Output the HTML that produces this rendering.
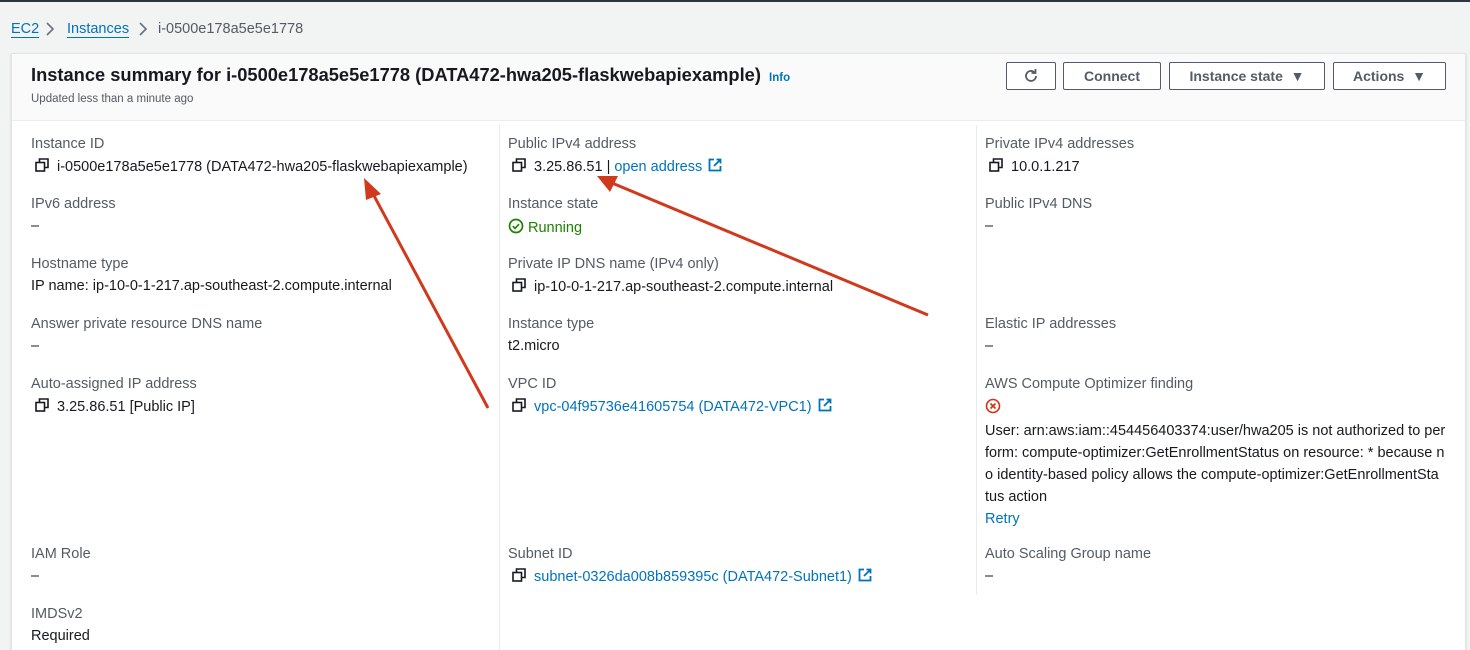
<!DOCTYPE html>
<html><head><style>
*{margin:0;padding:0;box-sizing:border-box}
html,body{width:1470px;height:650px;overflow:hidden}
body{background:#f2f3f3;font-family:"Liberation Sans",sans-serif;color:#16191f;position:relative;font-size:14.5px}
.a{position:absolute;white-space:nowrap}
.lbl{color:#545b64}
.lnk{color:#0073bb}
.card{position:absolute;left:11px;top:53px;width:1455px;height:620px;background:#fff;border:1px solid #e2e4e5;box-shadow:0 1px 2px rgba(0,0,0,.15)}
.hdr{position:absolute;left:0;top:0;right:0;height:67px;background:#fafafa;border-bottom:1px solid #eaeded}
.btn{position:absolute;top:62px;height:28px;border:1px solid #545b64;border-radius:2px;background:#fff;font-weight:bold;color:#545b64;text-align:center;line-height:26px;font-size:14px}
.vl{position:absolute;width:1px;background:#eaeded}
.cp{display:inline-block;vertical-align:-1px;margin-right:8px}
.ex{display:inline-block;vertical-align:-1px;margin-left:6px}
</style></head><body>
<svg width="0" height="0" style="position:absolute"><defs>
<symbol id="cp" viewBox="0 0 14 14"><rect x="1" y="4.5" width="8.5" height="8.5" fill="none" stroke="#16191f" stroke-width="1.6"/><path d="M4.5 4.5V1h8.5v8.5H9.5" fill="none" stroke="#16191f" stroke-width="1.6"/></symbol>
<symbol id="ex" viewBox="0 0 14 14"><path d="M6 1.5H1.5v11h11V8M8.5 1.5h4v4M12.5 1.5L6 8" fill="none" stroke="#0073bb" stroke-width="1.8"/></symbol>
</defs></svg>
<div class="a" style="left:0;top:0;width:1470px;height:2px;background:#2d3540"></div>
<div class="a lnk" style="left:11px;top:21px;border-bottom:1px solid #0073bb">EC2</div>
<svg class="a" style="left:45px;top:22px" width="10" height="14"><path d="M2 1l6 6-6 6" fill="none" stroke="#687078" stroke-width="1.6"/></svg>
<div class="a lnk" style="left:67px;top:21px;border-bottom:1px solid #0073bb">Instances</div>
<svg class="a" style="left:138px;top:22px" width="10" height="14"><path d="M2 1l6 6-6 6" fill="none" stroke="#687078" stroke-width="1.6"/></svg>
<div class="a" style="left:158px;top:21px;color:#545b64">i-0500e178a5e5e1778</div>
<div class="card"><div class="hdr"></div></div>
<div class="a" style="left:31px;top:64px;font-size:18.3px;font-weight:bold">Instance summary for i-0500e178a5e5e1778 (DATA472-hwa205-flaskwebapiexample) <span class="lnk" style="font-size:11.5px;margin-left:3px">Info</span></div>
<div class="a lbl" style="left:31px;top:93px;font-size:11.5px">Updated less than a minute ago</div>
<div class="btn" style="left:1006px;width:50px">
<svg width="18" height="18" style="margin-top:4px" viewBox="0 0 18 18"><path d="M14 9a5 5 0 1 1-1.6-3.7" fill="none" stroke="#545b64" stroke-width="1.8"/><path d="M13.5 2v4h-4" fill="none" stroke="#545b64" stroke-width="1.8"/></svg></div>
<div class="btn" style="left:1063px;width:98px">Connect</div>
<div class="btn" style="left:1169px;width:156px">Instance state &nbsp;&#9660;</div>
<div class="btn" style="left:1333px;width:113px">Actions &nbsp;&#9660;</div>
<div class="vl" style="left:499px;top:125px;height:525px"></div>
<div class="vl" style="left:976px;top:125px;height:470px"></div>
<!-- col1 -->
<div class="a lbl" style="left:31px;top:136px">Instance ID</div>
<div class="a" style="left:35px;top:158px"><svg class="cp" width="14" height="14"><use href="#cp"/></svg>i-0500e178a5e5e1778 (DATA472-hwa205-flaskwebapiexample)</div>
<div class="a lbl" style="left:31px;top:196px">IPv6 address</div>
<div class="a" style="left:31px;top:218px">–</div>
<div class="a lbl" style="left:31px;top:256px">Hostname type</div>
<div class="a" style="left:31px;top:278px">IP name: ip-10-0-1-217.ap-southeast-2.compute.internal</div>
<div class="a lbl" style="left:31px;top:316px">Answer private resource DNS name</div>
<div class="a" style="left:31px;top:338px">–</div>
<div class="a lbl" style="left:31px;top:376px">Auto-assigned IP address</div>
<div class="a" style="left:35px;top:398px"><svg class="cp" width="14" height="14"><use href="#cp"/></svg>3.25.86.51 [Public IP]</div>
<div class="a lbl" style="left:31px;top:546px">IAM Role</div>
<div class="a" style="left:31px;top:568px">–</div>
<div class="a lbl" style="left:31px;top:606px">IMDSv2</div>
<div class="a" style="left:31px;top:628px">Required</div>
<!-- col2 -->
<div class="a lbl" style="left:508px;top:136px">Public IPv4 address</div>
<div class="a" style="left:512px;top:158px"><svg class="cp" width="14" height="14"><use href="#cp"/></svg>3.25.86.51 | <span class="lnk">open address</span><svg class="ex" width="14" height="14"><use href="#ex"/></svg></div>
<div class="a lbl" style="left:508px;top:196px">Instance state</div>
<div class="a" style="left:508px;top:218px;color:#1d8102"><svg width="16" height="16" style="vertical-align:-2px;margin-right:4px" viewBox="0 0 16 16"><circle cx="8" cy="8" r="6.5" fill="none" stroke="#1d8102" stroke-width="1.7"/><path d="M4.8 8.2l2.2 2.2 4-4.2" fill="none" stroke="#1d8102" stroke-width="1.7"/></svg>Running</div>
<div class="a lbl" style="left:508px;top:256px">Private IP DNS name (IPv4 only)</div>
<div class="a" style="left:512px;top:278px"><svg class="cp" width="14" height="14"><use href="#cp"/></svg>ip-10-0-1-217.ap-southeast-2.compute.internal</div>
<div class="a lbl" style="left:508px;top:316px">Instance type</div>
<div class="a" style="left:508px;top:338px">t2.micro</div>
<div class="a lbl" style="left:508px;top:376px">VPC ID</div>
<div class="a" style="left:512px;top:398px"><svg class="cp" width="14" height="14"><use href="#cp"/></svg><span class="lnk">vpc-04f95736e41605754 (DATA472-VPC1)</span><svg class="ex" width="14" height="14"><use href="#ex"/></svg></div>
<div class="a lbl" style="left:508px;top:546px">Subnet ID</div>
<div class="a" style="left:512px;top:568px"><svg class="cp" width="14" height="14"><use href="#cp"/></svg><span class="lnk">subnet-0326da008b859395c (DATA472-Subnet1)</span><svg class="ex" width="14" height="14"><use href="#ex"/></svg></div>
<!-- col3 -->
<div class="a lbl" style="left:985px;top:136px">Private IPv4 addresses</div>
<div class="a" style="left:989px;top:158px"><svg class="cp" width="14" height="14"><use href="#cp"/></svg>10.0.1.217</div>
<div class="a lbl" style="left:985px;top:196px">Public IPv4 DNS</div>
<div class="a" style="left:985px;top:218px">–</div>
<div class="a lbl" style="left:985px;top:316px">Elastic IP addresses</div>
<div class="a" style="left:985px;top:338px">–</div>
<div class="a lbl" style="left:985px;top:376px">AWS Compute Optimizer finding</div>
<svg class="a" style="left:985px;top:398px" width="16" height="16"><circle cx="8" cy="8" r="6.5" fill="none" stroke="#d13212" stroke-width="1.6"/><path d="M5.5 5.5l5 5M10.5 5.5l-5 5" stroke="#d13212" stroke-width="1.6"/></svg>
<div class="a" style="left:985px;top:420px;line-height:22px">User: arn:aws:iam::454456403374:user/hwa205 is not authorized to per<br>form: compute-optimizer:GetEnrollmentStatus on resource: * because n<br>o identity-based policy allows the compute-optimizer:GetEnrollmentSta<br>tus action<br><span class="lnk">Retry</span></div>
<div class="a lbl" style="left:985px;top:546px">Auto Scaling Group name</div>
<div class="a" style="left:985px;top:568px">–</div>
<!-- arrows -->
<svg class="a" style="left:0;top:0" width="1470" height="650">
<g stroke="#d0391c" stroke-width="3" fill="#d0391c">
<line x1="488" y1="408" x2="372" y2="192"/>
<polygon points="364,178 381,194 366,200" stroke="none"/>
<line x1="928" y1="315" x2="612" y2="183"/>
<polygon points="597,176 618,176 610,192" stroke="none"/>
</g></svg>
</body></html>
